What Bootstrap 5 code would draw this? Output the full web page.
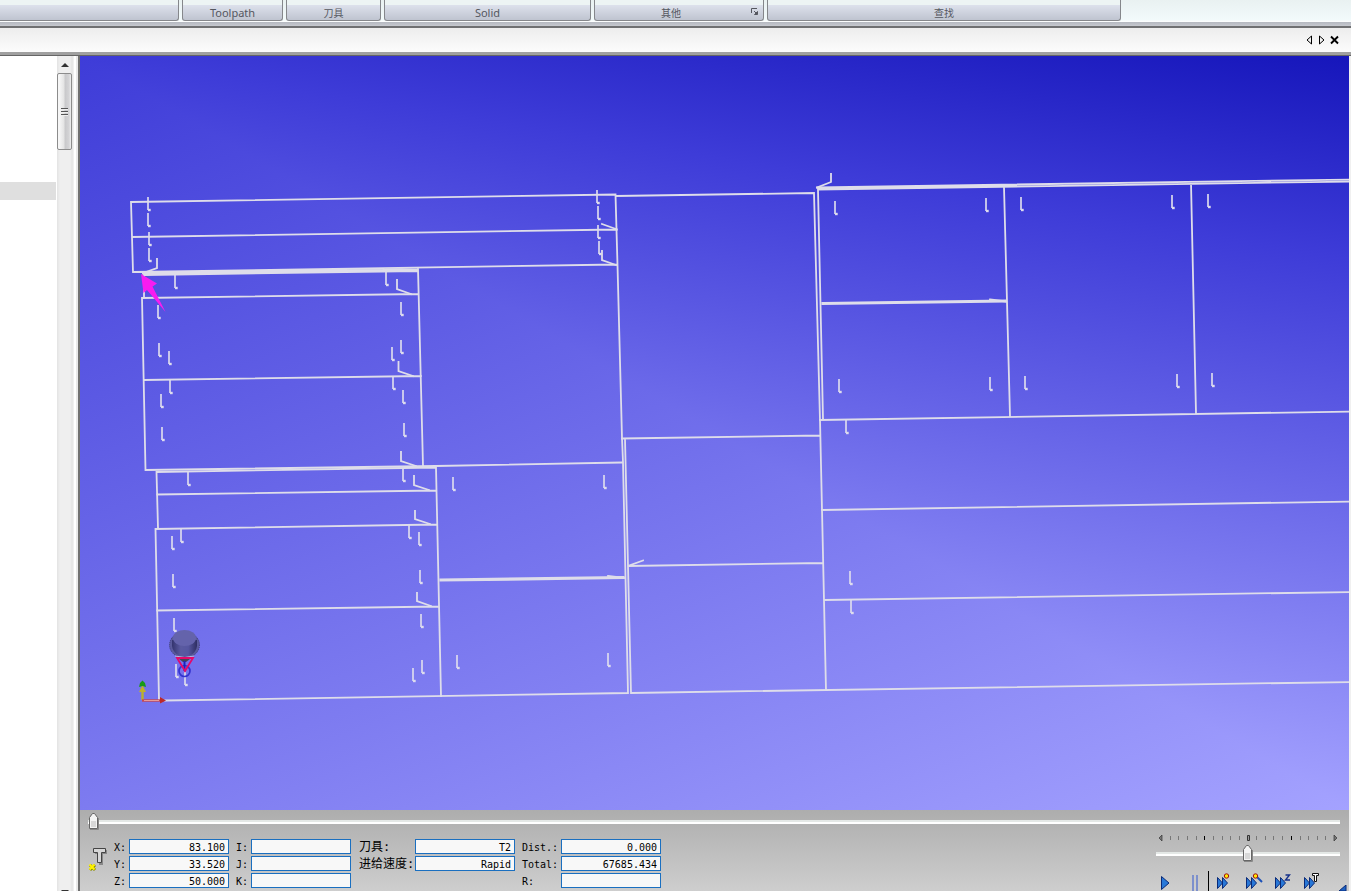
<!DOCTYPE html>
<html lang="zh-CN">
<head>
<meta charset="utf-8">
<meta name="viewport" content="width=device-width, initial-scale=1">
<title>Toolpath</title>
<link href="https://cdn.jsdelivr.net/npm/bootstrap@5.3.0/dist/css/bootstrap.min.css" rel="stylesheet">
<style>
body{font-family:"Noto Sans","Noto Sans CJK SC",sans-serif;font-size:11px;line-height:14px;background:#f0f0f0;color:#000}
button{color:inherit}
.ribbon{height:26px;background:linear-gradient(#e9f1f1,#f2fafb 20px,#fff 22px,#b4b8c0 22px,#c6c9cf)}
.ribbon-row{gap:3px}
.rgroup{height:21px;border:1px solid #85878b;border-top:0;border-radius:0 0 3px 3px;padding-top:5px;background:linear-gradient(#edf4f4 5px,#dde1ec 5px,#bfc4d0)}
.rgroup:first-child{border-left:0;border-radius:0 0 3px 0}
.rlabel{height:15px;line-height:16px;color:#55575f}
.rlabel:lang(zh-Hans){font-size:10px}
.launch{right:4px;top:7px;line-height:0}
.doctabs{height:30px;border-top:2px solid #6f7072;border-bottom:1px solid #666;background:linear-gradient(#ededed,#fcfcfc 24px,#a0a0a0 24px);padding:0 11px 3px 0;gap:4px}
.doctabs button{line-height:0}
.side{width:80px;border-right:2px solid #707070;background:#f1f1f1}
.tree{width:57px;padding-top:126px}
.treerow{height:18px;width:56px;background:#dfdfdf}
.vbar{width:15px;background:linear-gradient(90deg,#e3e3e3,#efefef 3px,#efefef 13px,#e3e3e3)}
.vbar button{height:17px;line-height:0}
.vthumb{height:77px;border:1px solid #8c8c8c;border-radius:2px;background:linear-gradient(90deg,#f6f6f6 10%,#e4e4e4 45%,#c9c9cb 55%,#d4d4d6 85%,#f0f0f0)}
.sidegap{width:6px;background:linear-gradient(90deg,#e6e6e6 1px,#f0f0f0 1px,#f0f0f0 2px,#fff 2px,#fff 4px,#e8e8e8 4px)}
.work{margin-right:2px}
.view{min-height:0;flex:1 1 0}
.panel{height:81px;background:linear-gradient(#adadad,#cecece);font-family:"DejaVu Sans Mono","Noto Sans CJK SC",monospace;font-size:10px}
.progress-slide,.speed-slide{appearance:none;-webkit-appearance:none;background:none;height:18px;margin:0;display:block}
.progress-slide::-webkit-slider-runnable-track,.speed-slide::-webkit-slider-runnable-track{height:4px;background:linear-gradient(#e4e8e6 2px,#fff 2px)}
.progress-slide::-webkit-slider-thumb,.speed-slide::-webkit-slider-thumb{-webkit-appearance:none;width:12px;height:18px;margin-top:-8px;background:url("data:image/svg+xml,%3Csvg xmlns='http://www.w3.org/2000/svg' width='12' height='18'%3E%3Cpath d='M1.5 5.500L4.500 1.500h2l3 4v11h-8z' fill='%23f4f4f4' stroke='%23666'/%3E%3Cpath d='M3 9h5v6H3z' fill='%23d8d8d8'/%3E%3Cpath d='M10.500 6v11.500H2' fill='none' stroke='%23888'/%3E%3C/svg%3E")}
.progress-slide{width:calc(100% - 17px);margin-left:8px}
.speed-slide{width:184px}
.panel-top{padding-top:3px}
.readout{gap:7px;padding-top:8px}
.fieldrow{height:17px}
.fieldrow label{line-height:17px;width:15px;white-space:nowrap}
.wide1{margin-left:1px}
.wide1 label{width:56px;font-size:12px}
.wide2 label{width:39px}
.fieldrow input{width:100px;height:15px;border:1px solid #1a6fc0;border-radius:0;background:#f8f8f8;font:inherit;text-align:right;padding:1px 3px 0 0;color:#000;outline:0}
.toolpick{width:26px;padding:6px 0 0 0;line-height:0;margin-right:-7px;text-align:left}
.toolpick svg{flex:none}
.speed{width:184px;margin-right:9px}
.playbar button{width:29px;height:20px;line-height:0;text-align:left}
.playbar .pausebtn{width:15px}
.rule{width:1px;height:20px;background:#000;margin-right:7px}
.grip{right:2px;bottom:0}
</style>
</head>
<body class="vh-100 overflow-hidden d-flex flex-column">
<header class="ribbon flex-shrink-0">
  <div class="ribbon-row d-flex text-center">
    <div class="rgroup" style="width:179px"></div>
    <div class="rgroup" style="width:101px"><div class="rlabel">Toolpath</div></div>
    <div class="rgroup" style="width:95px"><div class="rlabel" lang="zh-Hans">刀具</div></div>
    <div class="rgroup" style="width:207px"><div class="rlabel">Solid</div></div>
    <div class="rgroup position-relative" style="width:170px"><div class="rlabel pe-3" lang="zh-Hans">其他</div>
      <button class="launch btn p-0 border-0 position-absolute" aria-label="其他"><svg width="9" height="9"><path d="M1.500 6V1.500H7" fill="none" stroke="#55575f"/><path d="M4 4l3 3M7.500 4.500v3h-3z" stroke="#55575f" fill="#55575f"/></svg></button></div>
    <div class="rgroup" style="width:354px"><div class="rlabel" lang="zh-Hans">查找</div></div>
  </div>
</header>
<nav class="doctabs flex-shrink-0 d-flex justify-content-end align-items-center">
  <button class="btn p-0 border-0" aria-label="Previous"><svg width="8" height="10"><path d="M5.500 1v8L1 5z" fill="none" stroke="#000"/></svg></button>
  <button class="btn p-0 border-0" aria-label="Next"><svg width="8" height="10"><path d="M1.500 1v8L6 5z" fill="none" stroke="#000"/></svg></button>
  <button class="btn p-0 border-0" aria-label="Close"><svg width="10" height="10"><path d="M1 1.500l7 7M8 1.500l-7 7" stroke="#000" stroke-width="1.900"/></svg></button>
</nav>
<div class="d-flex flex-grow-1" style="min-height:0">
  <aside class="side flex-shrink-0 d-flex">
    <div class="tree bg-white"><div class="treerow"></div></div>
    <div class="vbar d-flex flex-column">
      <button class="btn p-0 border-0" aria-label="Up"><svg width="8" height="6"><path d="M0 5h8L4 1z" fill="#333"/></svg></button>
      <div class="vthumb d-flex align-items-center justify-content-center"><svg width="7" height="10"><path d="M0 1.500h7M0 4.500h7M0 7.500h7" stroke="#555"/><path d="M0 2.500h7M0 5.500h7M0 8.500h7" stroke="#eee"/></svg></div>
      <button class="btn p-0 border-0 mt-auto" aria-label="Down"><svg width="8" height="4" class="mt-3"><path d="M0 0h8L4 4z" fill="#333"/></svg></button>
    </div>
    <div class="sidegap"></div>
  </aside>
  <main class="work flex-grow-1 d-flex flex-column" style="min-width:0">
    <svg class="view w-100 d-block" viewBox="80 56 1269 754" preserveAspectRatio="xMinYMin slice">
      <defs>
        <linearGradient id="lower" gradientUnits="userSpaceOnUse" x1="80" y1="56" x2="471" y2="1130"><stop offset="0" stop-color="#3e3cd8"/><stop offset="1" stop-color="#a4a2ff"/></linearGradient>
        <linearGradient id="upper" gradientUnits="userSpaceOnUse" x1="1350" y1="56" x2="1232" y2="791"><stop offset="0" stop-color="#1616bb"/><stop offset=".27" stop-color="#3e3cd8"/><stop offset="1" stop-color="#a4a2ff"/></linearGradient>
        <linearGradient id="cup" x1="0" x2="1" y1="0" y2="0"><stop offset="0" stop-color="#34346e"/><stop offset=".35" stop-color="#5a5aa0"/><stop offset=".65" stop-color="#5656a0"/><stop offset="1" stop-color="#2e2e62"/></linearGradient>
        <g id="h"><path d="M0 0v13" stroke-width="1.900" opacity=".88"/><path d="M0 13h2.700" stroke-width="2.400"/></g>
      </defs>
      <path d="M80 56H1351V812H80z" fill="url(#lower)"/>
      <path d="M80 56H1351V811.600z" fill="url(#upper)"/>
      <g fill="none" stroke="#deddea" stroke-width="1.800" stroke-linecap="square">
        <path d="M133 272L131 202L615.500 194.500L617.500 265L622 438L623 462L628 693L165 700.500M132 237L617 229.500M133 272L617 264.500M143 273.500L418 269.500M145 275L418 271M144 275V297M142 298L418 294M142 298L145.500 470L436 466L622 462.500M144 380L421 376M418 269L423 466"/>
        <path d="M157 472L436 467.500L441 696M156.500 472L158 528M157 494.500L436 490.500M155.500 529L437 524.500M155.500 529L159 700M157 610.500L438 606.500"/>
        <path d="M616 196L814 193L820 420L826 690M622 438.500L820 435.500M625 439L631 693L1351 682M628 566L823 563"/>
        <path d="M817 187.500L1351 179.500M818 189.500L1351 181.500M818 190L823 419M1004 187L1010 416M1191 183L1196 413M820 420L1351 411.500M822 510L1351 501.500M825 600L1351 592"/>
        <path d="M441 580L623 577.500M823 303.500L1005 301" stroke-width="3.200"/>
        <path d="M608 576L624 578M990 299.500L1006 301.500M157 259v9L143 273M397 280v9L411 294M398.500 362v9L413 376M401 452v9L416 466M414 476v9L429 490M415 511v8L430 524M417 593v8L431 606M602 251v9L616 265M602 224L616 229M629 565.500L643 560.500M831 174v8L817 187.500"/>
      </g>
      <g id="holes" fill="none" stroke="#dddced"></g>
      <path d="M141 274L157 283.500L152.500 286.500L165.500 312L147 290L143.500 293z" fill="#f81cf0"/>
      <g>
        <ellipse cx="184.500" cy="645" rx="15" ry="13" fill="#5a5a9c" stroke="#3c3c78" stroke-dasharray="1 1"/>
        <path d="M172 640v6c2 14 23 14 25 0v-6z" fill="url(#cup)"/>
        <ellipse cx="184.500" cy="638" rx="11.500" ry="8" fill="#6463ab"/>
        <path d="M175 656q10 3 19 0" stroke="#b6b8e6" fill="none"/><path d="M179 659h11l-4 3h-3z" fill="#445"/>
        <circle cx="184.500" cy="671" r="5.500" fill="none" stroke="#3434cf" stroke-width="1.700"/>
        <path d="M184.500 661v10" stroke="#1c24ba" stroke-width="2"/>
        <path d="M177 658h16l-8 13z" fill="none" stroke="#e4086a" stroke-width="1.800"/>
      </g>
      <path d="M142.500 700v-12" stroke="#bab030" stroke-width="2.400"/><path d="M139 692l3.500-7 3.500 7z" fill="#c0b02e"/><path d="M139 687l1-4 2.500-2.500 2.500 2.500 1 4-3.500-1z" fill="#179a18"/>
      <path d="M142 700.500h19" stroke="#c84850" stroke-width="2.400"/><path d="M144 700.500h15" stroke="#efb0a8" stroke-width=".8"/><path d="M160 697l6 3.500-6 3z" fill="#bd2929"/>
    </svg>
    <section class="panel flex-shrink-0 position-relative overflow-hidden">
      <div class="panel-top"><input type="range" class="progress-slide" value="0" aria-label="Progress"></div>
      <div class="d-flex justify-content-between">
        <div class="readout d-flex">
          <button class="toolpick btn border-0 ms-2 d-flex align-items-start" aria-label="Tool"><svg width="22" height="28"><path d="M7 5h12v4h-4v11h-4V9H7z" fill="#888"/><path d="M5.500 3.500h12v4h-4v10h-4v-10h-4z" fill="#d6d6d6" stroke="#444"/><path d="M2 20l5 5M7 20l-5 5" stroke="#888800" stroke-width="3"/><path d="M1.500 19.500l5 5M6.500 19.500l-5 5" stroke="#fff200" stroke-width="2.200"/></svg></button>
          <div>
            <div class="fieldrow d-flex"><label for="fx">X:</label><input id="fx" value="83.100"></div>
            <div class="fieldrow d-flex"><label for="fy">Y:</label><input id="fy" value="33.520"></div>
            <div class="fieldrow d-flex"><label for="fz">Z:</label><input id="fz" value="50.000"></div>
          </div>
          <div>
            <div class="fieldrow d-flex"><label for="fi">I:</label><input id="fi"></div>
            <div class="fieldrow d-flex"><label for="fj">J:</label><input id="fj"></div>
            <div class="fieldrow d-flex"><label for="fk">K:</label><input id="fk"></div>
          </div>
          <div class="wide1">
            <div class="fieldrow d-flex"><label for="ft">刀具:</label><input id="ft" value="T2"></div>
            <div class="fieldrow d-flex"><label for="ff">进给速度:</label><input id="ff" value="Rapid"></div>
          </div>
          <div class="wide2">
            <div class="fieldrow d-flex"><label for="fd">Dist.:</label><input id="fd" value="0.000"></div>
            <div class="fieldrow d-flex"><label for="fo">Total:</label><input id="fo" value="67685.434"></div>
            <div class="fieldrow d-flex"><label for="fr">R:</label><input id="fr"></div>
          </div>
        </div>
        <div class="speed">
          <svg class="d-block" width="184" height="14" viewBox="1156 831 184 14">
            <path d="M1162 835v6l-3-3zM1334 835v6l3-3z" fill="#777" stroke="#333" stroke-width=".7"/>
            <path d="M1170.500 836v4M1178.500 836v4M1187.500 836v4M1196.500 836v4M1213.500 836v4M1222.500 836v4M1230.500 836v4M1239.500 836v4M1256.500 836v4M1265.500 836v4M1273.500 836v4M1282.500 836v4M1300.500 836v4M1308.500 836v4M1317.500 836v4M1325.500 836v4" stroke="#777"/>
            <path d="M1204.500 836v4M1291.500 836v4" stroke="#000"/><path d="M1247.500 835.500h2v5h-2z" fill="#999" stroke="#333"/>
          </svg>
          <input type="range" class="speed-slide" value="50" aria-label="Speed">
          <div class="playbar d-flex pt-2 ps-1">
            <button class="btn p-0 border-0" aria-label="Play"><svg width="12" height="20"><path d="M1.500 5.500v13L9 12z" fill="#2878d8" stroke="#0a2a78"/></svg></button>
            <button class="pausebtn btn p-0 border-0" aria-label="Pause"><svg width="12" height="20"><path d="M4 4v16M8 4v16" stroke="#7d90cc" stroke-width="2"/></svg></button>
            <span class="flex-shrink-0 ps-1"></span><div class="rule"></div>
            <button class="btn p-0 border-0" aria-label="Next point"><svg width="20" height="20"><use href="#ffw"/><circle cx="10.500" cy="5" r="2.200" fill="#ffe800" stroke="#a01010"/></svg></button>
            <button class="btn p-0 border-0" aria-label="Next segment"><svg width="20" height="20"><use href="#ffw"/><path d="M11 5l6 6" stroke="#1a50b8" stroke-width="2"/><circle cx="10.500" cy="5" r="2.200" fill="#ffe800" stroke="#a01010"/></svg></button>
            <button class="btn p-0 border-0" aria-label="Next Z"><svg width="20" height="20"><use href="#ffw"/><path d="M11.500 4h4l-4 5h4.500" fill="none" stroke="#15308a" stroke-width="1.400"/></svg></button>
            <button class="btn p-0 border-0" aria-label="Next tool"><svg width="20" height="20"><use href="#ffw"/><path d="M9.500 2.500h6v2h-2v6h-2v-6h-2z" fill="#fff" stroke="#111"/></svg></button>
          </div>
        </div>
      </div>
      <svg class="grip position-absolute" width="8" height="6"><path d="M0 6L7 0V6z" fill="#1d62c4" stroke="#0a2a78"/></svg>
    </section>
  </main>
</div>
<svg width="0" height="0" class="position-absolute"><defs><g id="ffw" fill="#2878d8" stroke="#0a2a78"><path d="M1.500 6.500v11l5-5.500z"/><path d="M6.500 6.500v11l5-5.500z"/></g></defs></svg>
<script src="https://cdn.jsdelivr.net/npm/bootstrap@5.3.0/dist/js/bootstrap.bundle.min.js"></script>
<script>
// Drill holes: x and top y of every plunge mark
const holes=[[148,197],[148,213],[149,232],[149,248],[175,275],[386,272],[158,305],[159,343],[169,351],[170,380],[161,394],[162,427],[401,302],[401,340],[392,347],[393,376],[403,390],[404,423],
[188,472],[403,468],[453,477],[181,529],[172,536],[173,574],[174,618],[176,664],[185,672],[409,525],[419,532],[420,570],[421,614],[422,660],[413,668],[457,655],
[597,190],[598,206],[598,225],[599,241],[604,475],[608,653],[846,420],[850,571],[851,600],
[835,201],[986,198],[1021,197],[1172,195],[1208,194],[839,379],[990,377],[1025,376],[1177,374],[1212,373]];
document.getElementById('holes').innerHTML=holes.map(([x,y])=>`<use href="#h" x="${x}" y="${y}"/>`).join('');
</script>
</body>
</html>
